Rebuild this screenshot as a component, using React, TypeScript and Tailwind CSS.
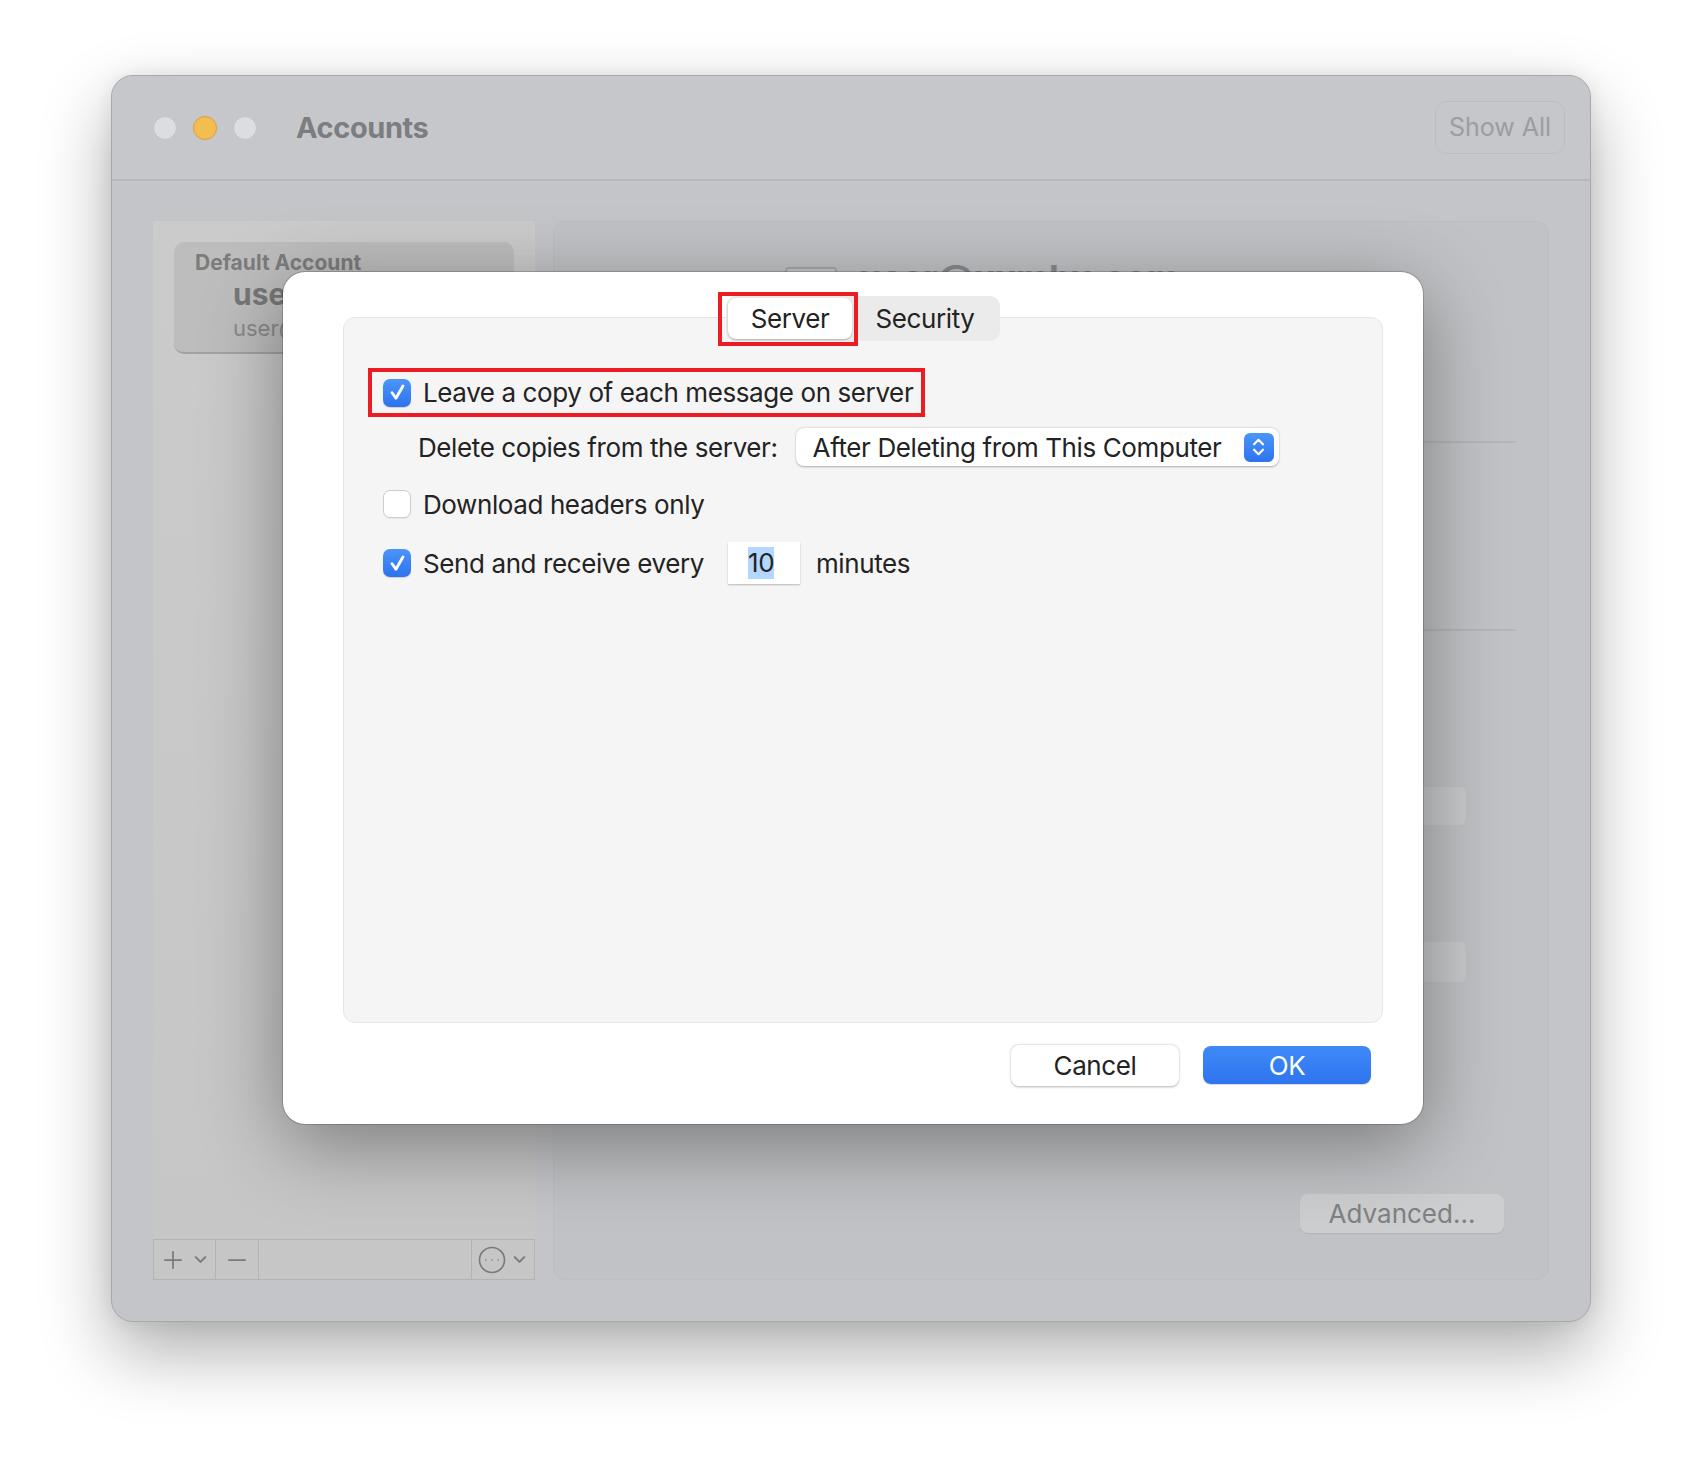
import { Plus, Minus, ChevronDown, CircleEllipsis } from "lucide-react";

function Checkbox({ checked }: { checked: boolean }) {
  if (!checked) {
    return (
      <span className="block h-[28px] w-[28px] shrink-0 rounded-[7px] border border-[#cdcdcd] bg-white shadow-[0_1px_1px_rgba(0,0,0,0.06)]" />
    );
  }
  return (
    <span className="flex h-[28px] w-[28px] shrink-0 items-center justify-center rounded-[7px] bg-linear-to-b from-[#4b95f9] to-[#2d73ee] shadow-[0_1px_1px_rgba(0,0,0,0.15)]">
      <svg viewBox="0 0 20 20" className="h-[21px] w-[21px]">
        <path
          d="M4.8 10.2 L8.5 15.4 L15.2 3.8"
          fill="none"
          stroke="white"
          strokeWidth="2.7"
          strokeLinecap="round"
          strokeLinejoin="round"
        />
      </svg>
    </span>
  );
}

function Stepper() {
  return (
    <span className="flex h-[29px] w-[30px] items-center justify-center rounded-[6px] bg-linear-to-b from-[#4b95f9] to-[#2d73ee]">
      <svg viewBox="0 0 16 22" className="h-[24px] w-[17px]">
        <path d="M3.8 8.5 L8 4.2 L12.2 8.5" fill="none" stroke="white" strokeWidth="2" strokeLinecap="round" strokeLinejoin="round" />
        <path d="M3.8 13.5 L8 17.8 L12.2 13.5" fill="none" stroke="white" strokeWidth="2" strokeLinecap="round" strokeLinejoin="round" />
      </svg>
    </span>
  );
}

function Sidebar() {
  return (
    <div className="flex w-[382px] shrink-0 flex-col bg-linear-to-b from-[#cbcbcb] to-[#c6c6c6]">
      <div className="flex-1 px-[21px] pt-[21px]">
        <div className="h-[112px] rounded-[10px] border-b-2 border-[#a2a2a2] bg-[#bdbdbd] pl-[21px] pt-[8px]">
          <div className="text-[21px] font-bold leading-[26px] text-[#7c7c7c]">Default Account</div>
          <div className="pl-[38px] text-[30px] font-bold leading-[36px] text-[#777]">user@xxmbx.com</div>
          <div className="pl-[38px] text-[22px] leading-[32px] text-[#8a8a8a]">user@xxmbx.com</div>
        </div>
      </div>
      <div className="flex h-[41px] border border-[#b3b3b3] text-[#7a7a7a]">
        <div className="flex w-[62px] items-center justify-center gap-[4px] border-r border-[#b3b3b3]">
          <Plus className="h-[28px] w-[28px]" strokeWidth={1.5} />
          <ChevronDown className="h-[19px] w-[19px]" strokeWidth={2.6} />
        </div>
        <div className="flex w-[43px] items-center justify-center border-r border-[#b3b3b3]">
          <Minus className="h-[28px] w-[28px]" strokeWidth={1.5} />
        </div>
        <div className="flex-1 border-r border-[#b3b3b3]" />
        <div className="flex w-[62px] items-center justify-center gap-[3px]">
          <CircleEllipsis className="h-[30px] w-[30px]" strokeWidth={1.3} />
          <ChevronDown className="h-[19px] w-[19px]" strokeWidth={2.6} />
        </div>
      </div>
    </div>
  );
}

function DetailPanel() {
  return (
    <div className="flex flex-1 flex-col rounded-[12px] border border-[#bdbec1] bg-[#c1c2c5] px-[32px]">
      <div className="ml-[199px] mt-[45px] flex items-start gap-[22px]">
        <span className="h-[40px] w-[52px] shrink-0 rounded-[4px] border-2 border-[#a8a9ac] bg-[#c8c9cc]" />
        <span className="-mt-[9px] text-[36px] font-bold leading-[40px] text-[#8a8b8e]">user@xxmbx.com</span>
      </div>
      <div className="mt-[134px] h-[2px] bg-[#b5b6b9]" />
      <div className="mt-[186px] h-[2px] bg-[#b5b6b9]" />
      <div className="mr-[50px] mt-[156px] ml-auto h-[38px] w-[520px] rounded-[6px] bg-[#c9cacd]" />
      <div className="mr-[50px] mt-[117px] ml-auto h-[40px] w-[520px] rounded-[6px] bg-[#c9cacd]" />
      <div className="ml-[273px] mt-[101px] h-[38px] w-[200px] rounded-[8px] bg-[#cbccce]" />
      <div className="mt-auto mb-[46px] flex justify-end pr-[12px]">
        <div className="flex h-[39px] w-[204px] items-center justify-center rounded-[8px] bg-[#cdcecf] text-[26px] text-[#7f8083] shadow-[0_1px_1px_rgba(0,0,0,0.08)]">
          Advanced...
        </div>
      </div>
    </div>
  );
}

function Dialog() {
  return (
    <div className="absolute left-[171px] top-[196px] z-20 flex h-[852px] w-[1140px] flex-col rounded-[22px] bg-white pl-[60px] pr-[40px] pt-[24px] tracking-[-0.4px] shadow-[0_20px_80px_rgba(0,0,0,0.38),0_0_0_1px_rgba(0,0,0,0.18)]">
      <div className="relative z-10 flex justify-center">
        <div className="relative flex h-[45px] items-center rounded-[10px] bg-[#ebebeb] p-[2px]">
          <div className="flex h-[41px] w-[124px] items-center justify-center rounded-[8px] bg-white shadow-[0_1px_2px_rgba(0,0,0,0.25)]">
            Server
          </div>
          <div className="flex h-[41px] w-[146px] items-center justify-center">Security</div>
          <span className="absolute left-[-8px] top-[-4px] h-[54px] w-[140px] border-4 border-[#ec1c24]" />
        </div>
      </div>
      <div className="-mt-[24px] flex h-[706px] flex-col rounded-[12px] border border-[#e6e6e6] bg-[#f5f5f5] pt-[50px]">
        <div className="ml-[24px] flex h-[49px] w-fit items-center gap-[12px] border-4 border-[#ec1c24] pl-[11px] pr-[8px]">
          <Checkbox checked />
          <span>Leave a copy of each message on server</span>
        </div>
        <div className="mt-[11px] flex h-[38px] items-center">
          <span className="ml-[74px]">Delete copies from the server:</span>
          <div className="ml-[18px] flex h-[38px] w-[483px] items-center justify-between rounded-[8px] bg-white pl-[17px] pr-[5px] shadow-[0_0.5px_2px_rgba(0,0,0,0.3)]">
            <span>After Deleting from This Computer</span>
            <Stepper />
          </div>
        </div>
        <div className="ml-[39px] mt-[19px] flex h-[38px] items-center gap-[12px]">
          <Checkbox checked={false} />
          <span>Download headers only</span>
        </div>
        <div className="ml-[39px] mt-[19px] flex h-[42px] items-center">
          <Checkbox checked />
          <span className="ml-[12px]">Send and receive every</span>
          <div className="ml-[24px] flex h-[42px] w-[72px] items-center bg-white pl-[20px] shadow-[0_1px_1.5px_rgba(0,0,0,0.25)]">
            <span className="bg-[#b3d7ff] leading-[32px]">10</span>
          </div>
          <span className="ml-[16px]">minutes</span>
        </div>
      </div>
      <div className="mt-[22px] flex justify-end gap-[24px] pr-[12px]">
        <div className="flex h-[41px] w-[168px] items-center justify-center rounded-[8px] bg-white shadow-[0_0.5px_2.5px_rgba(0,0,0,0.3)]">
          Cancel
        </div>
        <div className="mt-[1px] flex h-[38px] w-[168px] items-center justify-center rounded-[8px] bg-linear-to-b from-[#3f8af8] to-[#2e74ef] text-white shadow-[0_1px_1px_rgba(0,0,0,0.15)]">
          OK
        </div>
      </div>
    </div>
  );
}

export default function App() {
  return (
    <div className="h-[1470px] w-[1702px] bg-white pl-[111px] pt-[75px] text-[26px] text-[#232323] [font-family:Inter,'Noto_Sans',sans-serif]">
      <div className="relative flex h-[1247px] w-[1480px] flex-col overflow-hidden rounded-[22px] border border-[#a7a8ab] bg-[#c4c5c8] shadow-[0_30px_70px_rgba(0,0,0,0.32),0_0_20px_rgba(0,0,0,0.08)]">
        <div className="flex h-[105px] shrink-0 items-center border-b-2 border-[#b7b8bb] bg-[#c6c7ca] pl-[41px] pr-[25px]">
          <div className="flex gap-[16px]">
            <span className="h-[24px] w-[24px] rounded-full border border-[#c2c3c6] bg-[#dcdde0]" />
            <span className="h-[24px] w-[24px] rounded-full border border-[#d6a042] bg-[#f4bd4f]" />
            <span className="h-[24px] w-[24px] rounded-full border border-[#c2c3c6] bg-[#dcdde0]" />
          </div>
          <span className="ml-[39px] text-[29px] font-bold tracking-[-0.4px] text-[#7c7d80]">Accounts</span>
          <div className="ml-auto flex h-[53px] w-[130px] items-center justify-center rounded-[12px] border border-[#bcbdc0] text-[25px] text-[#9c9da0]">
            Show All
          </div>
        </div>
        <div className="flex flex-1 gap-[18px] px-[41px] pb-[41px] pt-[40px]">
          <Sidebar />
          <DetailPanel />
        </div>
        <Dialog />
      </div>
    </div>
  );
}
